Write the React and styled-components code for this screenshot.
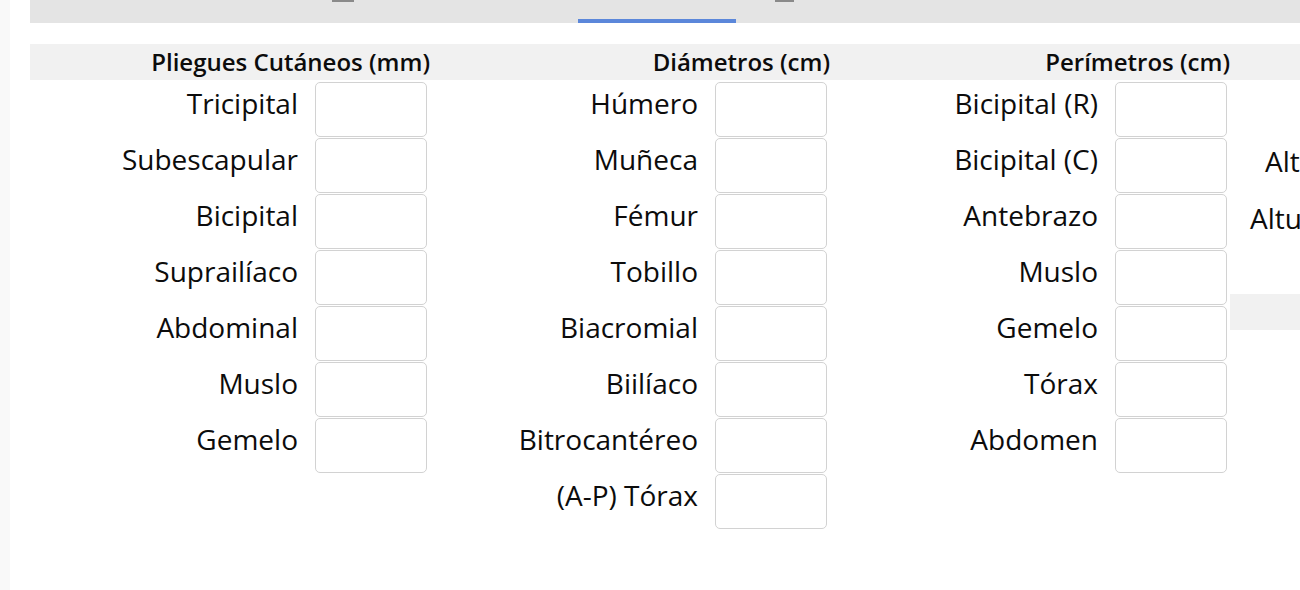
import React from 'react';
import styled, { createGlobalStyle } from 'styled-components';

const GlobalStyle = createGlobalStyle`
  html, body {
    margin: 0;
    padding: 0;
    background: #ffffff;
    overflow: hidden;
  }
  body {
    font-family: 'Open Sans', 'Noto Sans', sans-serif;
    color: #111;
  }
`;

// 왼쪽 얇은 사이드바 + 본문
const Page = styled.div`
  display: flex;
  width: 1300px;
  height: 590px;
  overflow: hidden;
`;

const SideStrip = styled.div`
  width: 10px;
  flex-shrink: 0;
  background: #f9f9f9;
`;

const Main = styled.div`
  flex: 1;
  padding-left: 20px;
  min-width: 0;
  overflow: hidden;
`;

const TabBar = styled.div`
  display: flex;
  height: 23px;
  background: #e4e4e4;
  padding-left: 234px;
`;

const Tab = styled.div`
  width: ${p => p.w}px;
  margin-left: ${p => p.ml || 0}px;
  display: flex;
  flex-direction: column;
  align-items: center;
  justify-content: space-between;
  box-sizing: border-box;
  border-bottom: 4px solid ${p => (p.active ? '#5b87da' : 'transparent')};
`;

const TabIconEdge = styled.span`
  display: block;
  width: ${p => p.w}px;
  height: 2px;
  background: ${p => (p.show ? '#8a8a8a' : 'transparent')};
`;

const Sheet = styled.div`
  margin-top: 21px;
  width: 1700px;
`;

const HeaderRow = styled.div`
  display: grid;
  grid-template-columns: 400px 400px 400px 400px;
  height: 36px;
  background: #f1f1f1;
  align-items: center;
`;

const HeaderCell = styled.div`
  text-align: right;
  font-weight: 600;
  font-size: 24px;
  line-height: 36px;
  color: #0c0c0c;
`;

const Columns = styled.div`
  display: grid;
  grid-template-columns: 400px 400px 400px 400px;
  padding-top: 2px;
  align-items: start;
`;

const Column = styled.div`
  display: flex;
  flex-direction: column;
  gap: 1px;
`;

const Row = styled.div`
  display: grid;
  grid-template-columns: 1fr 112px;
  column-gap: 17px;
  padding-right: 3px;
  height: 55px;
  align-items: center;
`;

const Label = styled.label`
  text-align: right;
  font-size: 28px;
  line-height: 1;
  padding-bottom: 13px;
  white-space: nowrap;
  color: #0c0c0c;
`;

const Field = styled.input`
  box-sizing: border-box;
  width: 112px;
  height: 55px;
  border: 1.5px solid #d2d2d2;
  border-radius: 5px;
  background: #fff;
  outline: none;
  margin: 0;
`;

const SideRow = styled.div`
  height: 56px;
  display: flex;
  align-items: center;
  padding-left: ${p => p.indent}px;
`;

const SideBand = styled.div`
  margin-top: 41px;
  height: 36px;
  background: #f1f1f1;
`;

const pliegues = ['Tricipital', 'Subescapular', 'Bicipital', 'Suprailíaco', 'Abdominal', 'Muslo', 'Gemelo'];
const diametros = ['Húmero', 'Muñeca', 'Fémur', 'Tobillo', 'Biacromial', 'Biilíaco', 'Bitrocantéreo', '(A-P) Tórax'];
const perimetros = ['Bicipital (R)', 'Bicipital (C)', 'Antebrazo', 'Muslo', 'Gemelo', 'Tórax', 'Abdomen'];

const FieldColumn = ({ items }) => (
  <Column>
    {items.map(name => (
      <Row key={name}>
        <Label>{name}</Label>
        <Field type="text" />
      </Row>
    ))}
  </Column>
);

const App = () => {
  return (
    <Page>
      <GlobalStyle />
      <SideStrip />
      <Main>
        <TabBar>
          <Tab w={158}>
            <TabIconEdge w={22} show />
          </Tab>
          <Tab w={158} ml={156} active>
            <TabIconEdge w={22} />
          </Tab>
          <Tab w={96}>
            <TabIconEdge w={19} show />
          </Tab>
        </TabBar>
        <Sheet>
          <HeaderRow>
            <HeaderCell>Pliegues Cutáneos (mm)</HeaderCell>
            <HeaderCell>Diámetros (cm)</HeaderCell>
            <HeaderCell>Perímetros (cm)</HeaderCell>
            <HeaderCell></HeaderCell>
          </HeaderRow>
          <Columns>
            <FieldColumn items={pliegues} />
            <FieldColumn items={diametros} />
            <FieldColumn items={perimetros} />
            <Column>
              <SideRow indent={35} />
              <SideRow indent={35}><Label>Altura (m)</Label></SideRow>
              <SideRow indent={20}><Label>Altura sentado</Label></SideRow>
              <SideBand />
            </Column>
          </Columns>
        </Sheet>
      </Main>
    </Page>
  );
};

export default App;
